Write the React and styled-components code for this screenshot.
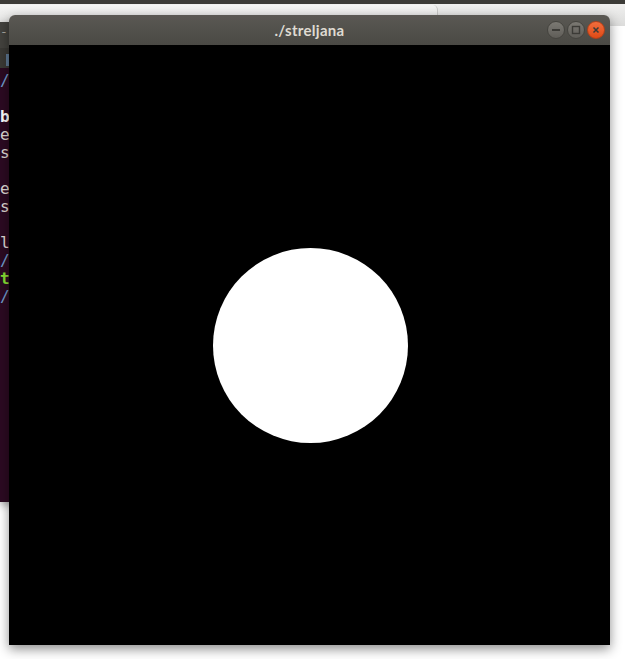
import React from "react"
import styled, { createGlobalStyle } from "styled-components"

const GlobalStyle = createGlobalStyle`
  html, body {
    margin: 0;
    padding: 0;
    background: #ffffff;
    overflow: hidden;
  }
`

// y positions are page coordinates of each visible terminal line
const termLines = [
    { top: 72, text: "/", color: "#729fcf" },
    { top: 108, text: "b", color: "#ffffff", bold: true },
    { top: 126, text: "e", color: "#e0dcd6" },
    { top: 144, text: "s", color: "#e0dcd6" },
    { top: 180, text: "e", color: "#e0dcd6" },
    { top: 198, text: "s", color: "#e0dcd6" },
    { top: 234, text: "l", color: "#e0dcd6" },
    { top: 252, text: "/", color: "#729fcf" },
    { top: 270, text: "t", color: "#8ae234", bold: true },
    { top: 288, text: "/", color: "#729fcf" },
]

export default function App() {
    return (
        <>
            <GlobalStyle />
            <Desktop>
                <TopStrip />
                <BackWindow />
                <Terminal>
                    <TermHeader>
                        <TermHeaderText>-|</TermHeaderText>
                    </TermHeader>
                    <TermTabs>
                        <TabMark />
                    </TermTabs>
                    <TermBody>
                        {termLines.map((l, i) => (
                            <TermLine
                                key={i}
                                $top={l.top}
                                $color={l.color}
                                $bold={l.bold}
                            >
                                {l.text}
                            </TermLine>
                        ))}
                    </TermBody>
                </Terminal>
                <Window>
                    <TitleBar>
                        <Title>./streljana</Title>
                        <Controls>
                            <CtrlButton>
                                <svg width="10" height="10" viewBox="0 0 10 10">
                                    <rect x="1" y="4" width="8" height="2" fill="#3c3b37" />
                                </svg>
                            </CtrlButton>
                            <CtrlButton>
                                <svg width="10" height="10" viewBox="0 0 10 10">
                                    <rect x="1.5" y="1.5" width="7" height="7" fill="none" stroke="#3c3b37" strokeWidth="1.4" />
                                </svg>
                            </CtrlButton>
                            <CtrlButton $close>
                                <svg width="10" height="10" viewBox="0 0 10 10">
                                    <path d="M2.5 2.5 L7.5 7.5 M7.5 2.5 L2.5 7.5" stroke="#3c3b37" strokeWidth="1.5" />
                                </svg>
                            </CtrlButton>
                        </Controls>
                    </TitleBar>
                    <Canvas>
                        <Ball />
                    </Canvas>
                </Window>
            </Desktop>
        </>
    )
}

const Desktop = styled.div`
    position: relative;
    width: 625px;
    height: 659px;
    background: #ffffff;
    overflow: hidden;
`

const TopStrip = styled.div`
    height: 4px;
    background: #3c3b37;
`

const BackWindow = styled.div`
    height: 22px;
    background: linear-gradient(#f0f0ef, #dcdcdb);
    position: relative;
    &::after {
        content: "";
        position: absolute;
        left: 0;
        top: 1px;
        width: 437px;
        height: 21px;
        border-right: 1px solid #c8c8c6;
        border-top-right-radius: 5px;
        background: linear-gradient(#f4f4f3, #e2e2e1);
    }
`

const Terminal = styled.div`
    position: absolute;
    left: 0;
    top: 22px;
    width: 60px;
    height: 480px;
    display: flex;
    flex-direction: column;
    box-shadow: 0 3px 8px rgba(0, 0, 0, 0.35);
`

const TermHeader = styled.div`
    height: 26px;
    background: #43423e;
    position: relative;
`

const TermHeaderText = styled.span`
    position: absolute;
    left: 0;
    top: 2px;
    font-family: "DejaVu Sans Mono", monospace;
    font-size: 13px;
    color: #a8a6a0;
`

const TermTabs = styled.div`
    height: 20px;
    background: #3b3a36;
    position: relative;
`

const TabMark = styled.div`
    position: absolute;
    left: 6px;
    top: 6px;
    width: 3px;
    height: 12px;
    background: #607a96;
`

const TermBody = styled.div`
    flex: 1;
    background: #2c0a22;
    position: relative;
`

const TermLine = styled.span`
    position: absolute;
    left: 0;
    top: ${(p) => p.$top - 68}px;
    font-family: "DejaVu Sans Mono", monospace;
    font-size: 16px;
    line-height: 18px;
    color: ${(p) => p.$color};
    font-weight: ${(p) => (p.$bold ? 700 : 400)};
`

const Window = styled.div`
    position: absolute;
    left: 9px;
    top: 15px;
    width: 601px;
    height: 630px;
    display: flex;
    flex-direction: column;
    border-radius: 6px 6px 0 0;
    overflow: hidden;
    box-shadow: 0 4px 12px rgba(0, 0, 0, 0.45);
`

const TitleBar = styled.div`
    height: 30px;
    background: linear-gradient(#5a5853, #4a4944);
    display: flex;
    align-items: center;
    justify-content: center;
    position: relative;
`

const Title = styled.div`
    font-family: "Lato", "DejaVu Sans", sans-serif;
    font-weight: 700;
    font-size: 15px;
    color: #dfdbd2;
    letter-spacing: 0.3px;
`

const Controls = styled.div`
    position: absolute;
    right: 5px;
    top: 6px;
    display: flex;
    gap: 2px;
`

const CtrlButton = styled.div`
    width: 18px;
    height: 18px;
    border-radius: 50%;
    display: flex;
    align-items: center;
    justify-content: center;
    box-sizing: border-box;
    border: 1px solid ${(p) => (p.$close ? "#b2401a" : "#45443f")};
    background: ${(p) =>
        p.$close
            ? "linear-gradient(#f26d3d, #de4a16)"
            : "linear-gradient(#7b7973, #5f5d58)"};
`

const Canvas = styled.div`
    flex: 1;
    background: #000000;
    display: flex;
    align-items: center;
    justify-content: center;
`

const Ball = styled.div`
    width: 195px;
    height: 195px;
    border-radius: 50%;
    background: #ffffff;
    margin-left: 1px;
`
